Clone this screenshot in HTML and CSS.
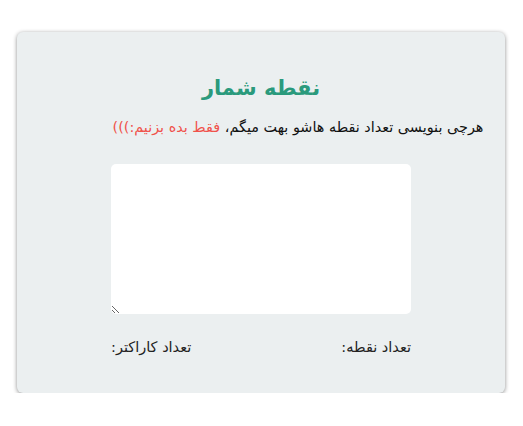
FILE: index.html
```html
<!DOCTYPE html>
<html lang="fa" dir="rtl">
<head>
<meta charset="utf-8">
<link rel="stylesheet" href="styles.css">
</head>
<body>
<div class="card">
  <h1 class="title">نقطه شمار</h1>
  <p class="subtitle">هرچی بنویسی تعداد نقطه هاشو بهت میگم، <span class="red">فقط بده بزنیم:)))</span></p>
  <textarea class="input"></textarea>
  <div class="stats">
    <span>تعداد نقطه:</span>
    <span>تعداد کاراکتر:</span>
  </div>
</div>
</body>
</html>
```
FILE: styles.css
```css
html, body {
  margin: 0;
  padding: 0;
  background: #ffffff;
}
body {
  padding: 32px 18px 0 17px;
  font-family: "DejaVu Sans", sans-serif;
}
.card {
  background: #ebeff0;
  border-radius: 6px;
  box-shadow: 0 1px 4px rgba(0,0,0,0.45);
  height: 361px;
  box-sizing: border-box;
  padding-top: 40px;
  display: flex;
  flex-direction: column;
  align-items: center;
}
.title {
  margin: 0;
  font-size: 21px;
  font-weight: bold;
  color: #2a9a7c;
  line-height: 32px;
}
.subtitle {
  margin: 11px 0 0 0;
  padding-left: 74px;
  font-size: 14.4px;
  line-height: 24px;
  color: #111;
}
.red {
  color: #f0524b;
}
.input {
  margin-top: 25px;
  width: 300px;
  height: 150px;
  box-sizing: border-box;
  border: none;
  border-radius: 5px;
  background: #fff;
  resize: vertical;
  outline: none;
  padding: 4px;
}
.stats {
  width: 300px;
  display: flex;
  justify-content: space-between;
  margin-top: 25px;
  font-size: 14.5px;
  color: #222;
}
```
